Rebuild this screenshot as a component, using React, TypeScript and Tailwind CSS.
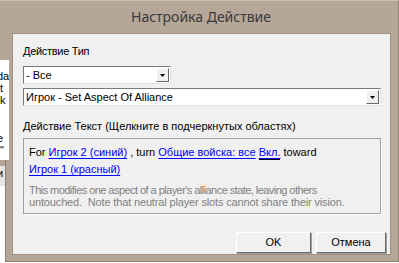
const Arrow = () => (
    <div className="w-[13px] h-[14px] bg-[#f0f0f0] border border-t-white border-l-white border-b-[#696969] border-r-[#696969] flex items-center justify-center">
        <svg width="5" height="3" viewBox="0 0 5 3">
            <path d="M0 0 H5 L2.5 3 Z" fill="#000" />
        </svg>
    </div>
);

const Combo = ({ text, width }: { text: string; width: string }) => (
    <div className={`${width} h-[18px] bg-white border border-t-[#7a7a7a] border-l-[#7a7a7a] border-b-[#e3e3e3] border-r-[#e3e3e3] flex items-center justify-between pl-[2px] pr-[1px]`}>
        <span className="leading-[13px]">{text}</span>
        <Arrow />
    </div>
);

const Link = ({ children }: { children: React.ReactNode }) => (
    <span className="text-[#0000ff] underline underline-offset-[2px]">{children}</span>
);

const Button = ({ label, width }: { label: string; width: string }) => (
    <div className={`${width} h-[21px] bg-[#f0f0f0] border border-t-white border-l-white border-b-[#696969] border-r-[#696969] shadow-[1px_1px_0_#a0a0a0] flex items-center justify-center`}>
        {label}
    </div>
);

export default function App() {
    return (
        <div className="relative w-[399px] h-[263px] bg-white overflow-hidden font-['Liberation_Sans',Arial,sans-serif] text-[11px] text-black">
            {/* dialog frame */}
            <div className="w-[399px] h-[262px] bg-[#b5a698] border-t border-t-[#c9bdb1] border-r border-b border-[#8c8175] flex flex-col">
                <div className="h-[32px] flex items-center justify-center pb-[1px] pl-[4px] font-['Noto_Sans',sans-serif] text-[14px] text-[#3a3a3a]">
                    Настройка Действие
                </div>
                <div className="ml-[12px] w-[379px] h-[222px] bg-[#f0f0f0] border border-[#9c9084] flex flex-col px-[10px]">
                    <div className="mt-[11px] leading-[13px] tracking-[-0.3px]">Действие Тип</div>
                    <div className="mt-[8px]">
                        <Combo text="- Все" width="w-[148px]" />
                    </div>
                    <div className="mt-[4px]">
                        <Combo text="Игрок - Set Aspect Of Alliance" width="w-[358px]" />
                    </div>
                    <div className="mt-[14px] leading-[13px]">Действие Текст (Щелкните в подчеркнутых областях)</div>
                    <div className="mt-[5px] w-[358px] h-[76px] border border-[#a0a0a0] shadow-[1px_1px_0_#ffffff] px-[5px] pt-[5px] leading-[17px]">
                        <div>
                            For <Link>Игрок 2 (синий)</Link> , turn <Link>Общие войска: все</Link>{" "}
                            <span className="border-b border-black pb-[1px]">
                                <Link>Вкл.</Link>
                            </span>{" "}
                            toward
                        </div>
                        <div>
                            <Link>Игрок 1 (красный)</Link>
                        </div>
                        <div className="mt-[6px] text-[#808080] leading-[12px] whitespace-nowrap">
                            <div className="tracking-[-0.55px]">This modifies one aspect of a player's alliance state, leaving others</div>
                            <div className="tracking-[-0.15px]">untouched.&nbsp; Note that neutral player slots cannot share their vision.</div>
                        </div>
                    </div>
                    <div className="mt-[18px] flex justify-end gap-[5px] -mr-[6px]">
                        <Button label="OK" width="w-[75px]" />
                        <Button label="Отмена" width="w-[70px]" />
                    </div>
                </div>
            </div>

            {/* window behind, seen through the frame */}
            <div className="absolute left-0 top-[60px] w-[9px] h-[100px] bg-white overflow-hidden leading-[12px] text-[11px]">
                <div className="mt-[10px] -ml-[3px]">da</div>
                <div>t</div>
                <div>k</div>
                <div className="mt-[26px] -ml-[3px]">e</div>
                <div>"</div>
            </div>
            <div className="absolute left-0 top-[166px] w-[5px] h-[20px] bg-[#e6e6e6] overflow-hidden leading-[14px] text-[11px]">
                <div className="-ml-[3px]">и</div>
            </div>
            <div className="absolute left-0 top-[186px] w-[5px] h-[77px] bg-white" />
            <div className="absolute left-[5px] top-[160px] w-px h-[102px] bg-[#8c8175]" />
        </div>
    );
}
